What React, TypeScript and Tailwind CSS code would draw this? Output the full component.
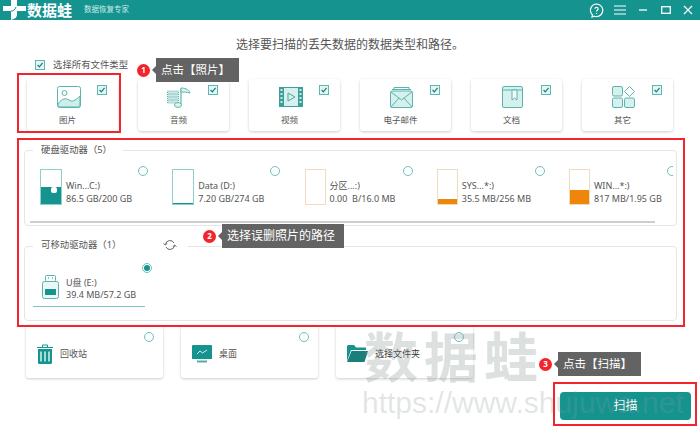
import type { ReactNode } from "react";

const disks = [
  { name: "Win...C:)", size: "86.5 GB/200 GB", fill: 50, kind: "sys" },
  { name: "Data (D:)", size: "7.20 GB/274 GB", fill: 3, kind: "sys" },
  { name: "分区...:)", size: "0.00  B/16.0 MB", fill: 0, kind: "other" },
  { name: "SYS...*:)", size: "35.5 MB/256 MB", fill: 14, kind: "other" },
  { name: "WIN...*:)", size: "817 MB/1.95 GB", fill: 42, kind: "other" },
];

function Check() {
  return (
    <span className="flex h-[10px] w-[10px] items-center justify-center border border-[#5db8b2] bg-[#e6f5f3]">
      <svg viewBox="0 0 10 10" className="h-[8px] w-[8px]" fill="none" stroke="#14807c" strokeWidth="1.5">
        <path d="M2 5l2.2 2.4L8.2 2.4" />
      </svg>
    </span>
  );
}

function Radio({ on }: { on?: boolean }) {
  return (
    <span className="flex h-[10px] w-[10px] items-center justify-center rounded-full border border-[#6cc0ba] bg-white">
      {on && <span className="h-[6px] w-[6px] rounded-full bg-[#14938f]" />}
    </span>
  );
}

function ImageIcon() {
  return (
    <svg viewBox="0 0 24 22" className="h-[22px] w-[24px]" fill="none" stroke="#5ab5ae" strokeWidth="1">
      <rect x="0.5" y="0.5" width="23" height="21" rx="2" fill="#fff" />
      <path d="M1 18c4-6 8-6 11-4s6 1 11-4v9a2 2 0 0 1-2 2H3a2 2 0 0 1-2-2z" fill="#cfeeea" />
      <circle cx="7.5" cy="7" r="2.5" />
    </svg>
  );
}

function MusicIcon() {
  return (
    <svg viewBox="0 0 25 21" className="h-[21px] w-[25px]" fill="none" stroke="#5ab5ae" strokeWidth="1">
      <rect x="0.5" y="4" width="11" height="12" fill="#cfe8e5" strokeDasharray="1 1" />
      <path d="M1 7h10M1 10h10M1 13h10" stroke="#8fcbc6" />
      <path d="M14 2v15" strokeWidth="1.2" />
      <path d="M14 1c3 0 8 1 9 5-3-1-6-1-9-1z" fill="#e2f4f2" />
      <ellipse cx="11" cy="18" rx="3.5" ry="2.4" fill="#e2f4f2" />
    </svg>
  );
}

function VideoIcon() {
  return (
    <svg viewBox="0 0 24 20" className="h-[20px] w-[24px]" fill="none" stroke="#3ea19b" strokeWidth="1">
      <rect x="0.5" y="0.5" width="23" height="19" rx="1" fill="#d5f0ed" />
      <path d="M0 0h5v20H0zM19 0h5v20h-5z" fill="#3b9f99" stroke="none" />
      <path d="M1.5 3h2M1.5 7h2M1.5 11h2M1.5 15h2M20.5 3h2M20.5 7h2M20.5 11h2M20.5 15h2" stroke="#fff" strokeWidth="1.6" />
      <path d="M9 6l7 4-7 4z" stroke="#4aa8a2" />
    </svg>
  );
}

function MailIcon() {
  return (
    <svg viewBox="0 0 23 22" className="h-[22px] w-[23px]" fill="none" stroke="#5ab5ae" strokeWidth="1">
      <path d="M4 3V1.500h15V3" />
      <path d="M2 3.500h19" />
      <rect x="0.5" y="5" width="22" height="16.500" rx="1.500" fill="#d5f0ed" />
      <path d="M1 6l10.500 8L22 6M1 21l8-9M22 21l-8-9" />
    </svg>
  );
}

function DocIcon() {
  return (
    <svg viewBox="0 0 21 22" className="h-[22px] w-[21px]" fill="none" stroke="#5ab5ae" strokeWidth="1">
      <rect x="0.5" y="0.5" width="20" height="21" rx="1.500" fill="#d5f0ed" />
      <path d="M1 4h19" />
      <path d="M10 4v10l2.500-2L15 14V4z" fill="#f4fbfa" />
    </svg>
  );
}

function OtherIcon() {
  return (
    <svg viewBox="0 0 23 22" className="h-[22px] w-[23px]" fill="#d5f0ed" stroke="#5ab5ae" strokeWidth="1">
      <rect x="0.5" y="0.500" width="10" height="9.500" rx="1.500" />
      <rect x="0.5" y="12" width="10" height="9.500" rx="1.500" />
      <rect x="12.500" y="12" width="10" height="9.500" rx="1.500" />
      <path d="M17.500 0.500l5 5-5 5-5-5z" fill="#fff" />
    </svg>
  );
}

function TrashIcon() {
  return (
    <svg viewBox="0 0 16 20" className="h-[20px] w-[16px]" fill="#14938f">
      <path d="M1 5h14v13.500a1.500 1.500 0 0 1-1.500 1.500h-11A1.500 1.500 0 0 1 1 18.500z" />
      <path d="M0 3.500h16M5.500 3V1h5v2" fill="none" stroke="#14938f" />
      <path d="M4 7.500v10M8 7.500v10M12 7.500v10" stroke="#d8f1ee" strokeWidth="1.500" />
    </svg>
  );
}

function DesktopIcon() {
  return (
    <svg viewBox="0 0 20 18" className="h-[18px] w-[20px]" fill="none">
      <path d="M1 0h18a1 1 0 0 1 1 1v13H0V1a1 1 0 0 1 1-1z" fill="#14938f" />
      <path d="M5 9l3-3 2.500 2L15 5" stroke="#d8f1ee" />
      <path d="M5 16.500h10" stroke="#4fb0ab" strokeWidth="2" />
    </svg>
  );
}

function FolderIcon() {
  return (
    <svg viewBox="0 0 21 17" className="h-[17px] w-[21px]">
      <path d="M0 1.500A1.500 1.500 0 0 1 1.500 0H7l2 2.500h10V5H4L0 16z" fill="#14938f" />
      <path d="M4.500 6H21l-3.500 11H0z" fill="#1a7f7b" />
    </svg>
  );
}

function UsbIcon() {
  return (
    <svg viewBox="0 0 17 24" className="h-[24px] w-[17px]" fill="none" stroke="#5ab5ae" strokeWidth="1">
      <rect x="3.500" y="0.500" width="10" height="6" rx="1" fill="#fff" />
      <path d="M6 3h1M10 3h1" stroke="#14938f" />
      <rect x="0.500" y="6.500" width="16" height="17" rx="2" fill="#eaf7f6" />
      <rect x="3" y="14" width="11" height="6" rx="0.500" fill="#14938f" stroke="none" />
    </svg>
  );
}

function RefreshIcon() {
  return (
    <svg viewBox="0 0 14 12" className="h-[12px] w-[14px]" fill="none" stroke="#555" strokeWidth="0.900">
      <path d="M2.500 5.500A4.500 4.500 0 0 1 11 4M11.500 6.500A4.500 4.500 0 0 1 3 8" />
      <path d="M0.500 4.500l2 1.500 1.500-1.800M13.500 7.500l-2-1.500-1.500 1.800" />
    </svg>
  );
}

function LogoMark() {
  return (
    <svg viewBox="0 0 24 20" className="h-[20px] w-[24px]" fill="#fff">
      <path d="M8 0h6v6h9v5h-9v4c0 2-2 4-6 5v-9H0V6h8z" />
      <path d="M8 11c2 0 4-1 5-4" fill="none" stroke="#14938f" strokeWidth="1" />
    </svg>
  );
}

function TypeCard({ label, icon }: { label: string; icon: ReactNode }) {
  return (
    <div className="relative flex h-[52px] w-[91px] flex-col items-center rounded-[3px] bg-white pt-[7px] shadow-[0_1px_3px_rgba(0,0,0,0.2)]">
      <div className="flex h-[22px] -translate-x-[4px] items-center">{icon}</div>
      <span className="absolute right-[11px] top-[6px]">
        <Check />
      </span>
      <span className="mt-[6px] -translate-x-[5px] text-[8.5px] leading-[12px] text-[#555]">{label}</span>
    </div>
  );
}

function DiskGlyph({ fill, kind }: { fill: number; kind: string }) {
  const sys = kind === "sys";
  return (
    <div
      className={
        sys
          ? "relative flex h-[36px] w-[22px] flex-col justify-end border border-[#8fd0cb] bg-white"
          : "relative flex h-[36px] w-[21px] flex-col justify-end border border-[#f3d9bd] bg-white"
      }
    >
      <div className={sys ? "bg-[#14938f]" : "bg-[#ef860c]"} style={{ height: `${fill}%` }} />
      {fill > 40 && sys && <span className="absolute right-[4px] top-[17px] h-[6px] w-[6px] rounded-[2px] bg-white" />}
    </div>
  );
}

function PathCard({ label, icon, dark }: { label: string; icon: ReactNode; dark?: boolean }) {
  return (
    <div className="relative flex h-[53px] w-[137px] items-center gap-[7px] rounded-[3px] bg-white pl-[11px] pt-[4px] shadow-[0_1px_3px_rgba(0,0,0,0.2)]">
      {icon}
      <span className={dark ? "text-[9px] text-[#333]" : "text-[9px] text-[#555]"}>{label}</span>
      <span className="absolute right-[9px] top-[7px]">
        <Radio />
      </span>
    </div>
  );
}

function Tip({ n, text, className }: { n: number; text: string; className: string }) {
  return (
    <div className={`absolute flex items-center ${className}`}>
      <span className="flex h-[13px] w-[13px] items-center justify-center rounded-full bg-[#f2242c] text-[8px] font-bold text-white">
        {n}
      </span>
      <span className="ml-[2px] h-0 w-0 border-y-[4px] border-r-[4px] border-y-transparent border-r-[#636363]" />
      <span className="flex h-[24px] items-center bg-[#636363] pl-[5px] pr-[9px] text-white">{text}</span>
    </div>
  );
}

export default function App() {
  return (
    <div
      className="relative flex h-[427px] w-[700px] flex-col overflow-hidden bg-white text-[#555]"
      style={{ fontFamily: '"Noto Sans", "Noto Sans CJK SC", sans-serif' }}
    >
      <header className="flex h-[20px] items-center bg-[#14938f] pl-[3px] text-white">
        <LogoMark />
        <span className="text-[15px] font-bold leading-[20px]">数据蛙</span>
        <span className="ml-[12px] text-[7.500px] text-[#cdeae8]">数据恢复专家</span>
        <div className="ml-auto flex items-center gap-[10px] pr-[7px]">
          <svg viewBox="0 0 15 15" className="h-[15px] w-[15px]" fill="none" stroke="#fff" strokeWidth="1.200">
            <path d="M7.500 1a6.300 6.300 0 0 1 0 12.600c-.8 0-1.500-.1-2.200-.4L3 14l.4-2.200A6.300 6.300 0 0 1 7.500 1z" />
            <path d="M5.900 5.800a1.600 1.600 0 1 1 2.400 1.500c-.6.400-.8.700-.8 1.300M7.500 10v1" />
          </svg>
          <svg viewBox="0 0 12 10" className="h-[10px] w-[12px]" stroke="#fff" strokeWidth="1.100">
            <path d="M0 1h12M0 5h12M0 9h12" />
          </svg>
          <svg viewBox="0 0 9 10" className="ml-[3px] h-[10px] w-[9px]" stroke="#fff" strokeWidth="1.300">
            <path d="M0 5h8" />
          </svg>
          <svg viewBox="0 0 10 8" className="ml-[3px] h-[8px] w-[10px]" fill="none" stroke="#fff" strokeWidth="1.300">
            <rect x="0.700" y="0.700" width="8.600" height="6.600" />
          </svg>
          <svg viewBox="0 0 10 10" className="ml-[2px] h-[10px] w-[10px]" stroke="#fff" strokeWidth="1.200">
            <path d="M1 1l8 8M9 1l-8 8" />
          </svg>
        </div>
      </header>

      <h1 className="mt-[17px] text-center text-[12px] font-normal leading-[16px] text-[#555]">
        选择要扫描的丢失数据的数据类型和路径。
      </h1>

      <label className="ml-[35px] mt-[5px] flex h-[14px] items-center gap-[8px] text-[9.400px]">
        <Check />
        选择所有文件类型
      </label>

      <div className="ml-[27px] mt-[7px] flex gap-[20px]">
        <TypeCard label="图片" icon={<ImageIcon />} />
        <TypeCard label="音频" icon={<MusicIcon />} />
        <TypeCard label="视频" icon={<VideoIcon />} />
        <TypeCard label="电子邮件" icon={<MailIcon />} />
        <TypeCard label="文档" icon={<DocIcon />} />
        <TypeCard label="其它" icon={<OtherIcon />} />
      </div>

      <section className="relative ml-[24px] mt-[19px] h-[76px] w-[653px] rounded-[4px] border border-[#e4e6e6] pl-[15px] pt-[14px]">
        {/* last radio is clipped by the scroll area */}
        <div className="flex w-[633px] overflow-hidden pt-[4px]">
          {disks.map((d) => (
            <div key={d.name} className="relative flex w-[132.250px] shrink-0">
              <DiskGlyph fill={d.fill} kind={d.kind} />
              <div className="ml-[4px] whitespace-pre pt-[10px] text-[9px] leading-[13px] text-[#555]">
                <div>{d.name}</div>
                <div>{d.size}</div>
              </div>
              <span className="absolute left-[98px] top-[-3px]">
                <Radio />
              </span>
            </div>
          ))}
        </div>
        <div className="mt-[16px] h-[2px] w-[625px] -translate-x-[10px] bg-[#c9d0ce]" />
      </section>
      <div className="absolute left-[33px] top-[144px] flex h-[12px] w-[90px] items-center bg-white pl-[8px] text-[9.400px]">
        硬盘驱动器（5）
      </div>

      <section className="ml-[24px] mt-[20px] h-[75px] w-[653px] rounded-[4px] border border-[#e4e6e6] pl-[8px] pt-[28px]">
        <div className="relative flex h-[32px] w-[112px] border-b border-[#7cc8c3] pl-[9px]">
          <UsbIcon />
          <div className="ml-[7px] pt-[2px] text-[9px] leading-[12px]">
            <div>U盘 (E:)</div>
            <div className="whitespace-nowrap">39.4 MB/57.2 GB</div>
          </div>
          <span className="absolute left-[109px] top-[-12px]">
            <Radio on />
          </span>
        </div>
      </section>
      <div className="absolute left-[33px] top-[239px] flex h-[12px] w-[155px] items-center bg-white pl-[8px] text-[9.400px]">
        可移动驱动器（1）
        <span className="ml-[42px]">
          <RefreshIcon />
        </span>
      </div>

      <div className="ml-[26px] mt-[4px] flex gap-[18px]">
        <PathCard label="回收站" icon={<TrashIcon />} />
        <PathCard label="桌面" icon={<DesktopIcon />} />
        <PathCard label="选择文件夹" icon={<FolderIcon />} dark />
      </div>

      <div className="mt-[14px] flex justify-end pr-[9px]">
        <button className="h-[28px] w-[131px] rounded-[4px] bg-[#14938f] text-[12px] text-white">扫描</button>
      </div>

      {/* watermark sits on top of the window */}
      <div className="pointer-events-none absolute left-[364px] top-[322px] text-[54px] font-bold leading-[70px] tracking-[6px] text-[#8a9a94]/30">
        数据蛙
      </div>
      <div
        className="pointer-events-none absolute left-[362px] top-[385px] whitespace-nowrap text-[30px] leading-[36px] text-[#8a9a94]/25"
        style={{ fontFamily: '"Liberation Sans", sans-serif' }}
      >
        https://www.shujuwa.net
      </div>

      {/* tutorial annotations */}
      <div className="absolute left-[17px] top-[73px] h-[60px] w-[104px] border-2 border-[#f2242c]" />
      <div className="absolute left-[17px] top-[138px] h-[189px] w-[668px] border-2 border-[#f2242c]" />
      <div className="absolute left-[553px] top-[382px] h-[44px] w-[144px] border-2 border-[#f2242c]" />
      <Tip n={1} text="点击【照片】" className="left-[137px] top-[58px] text-[11.500px]" />
      <Tip n={2} text="选择误删照片的路径" className="left-[203px] top-[224px] text-[12px]" />
      <Tip n={3} text="点击【扫描】" className="left-[539px] top-[352px] text-[11.500px]" />
    </div>
  );
}
